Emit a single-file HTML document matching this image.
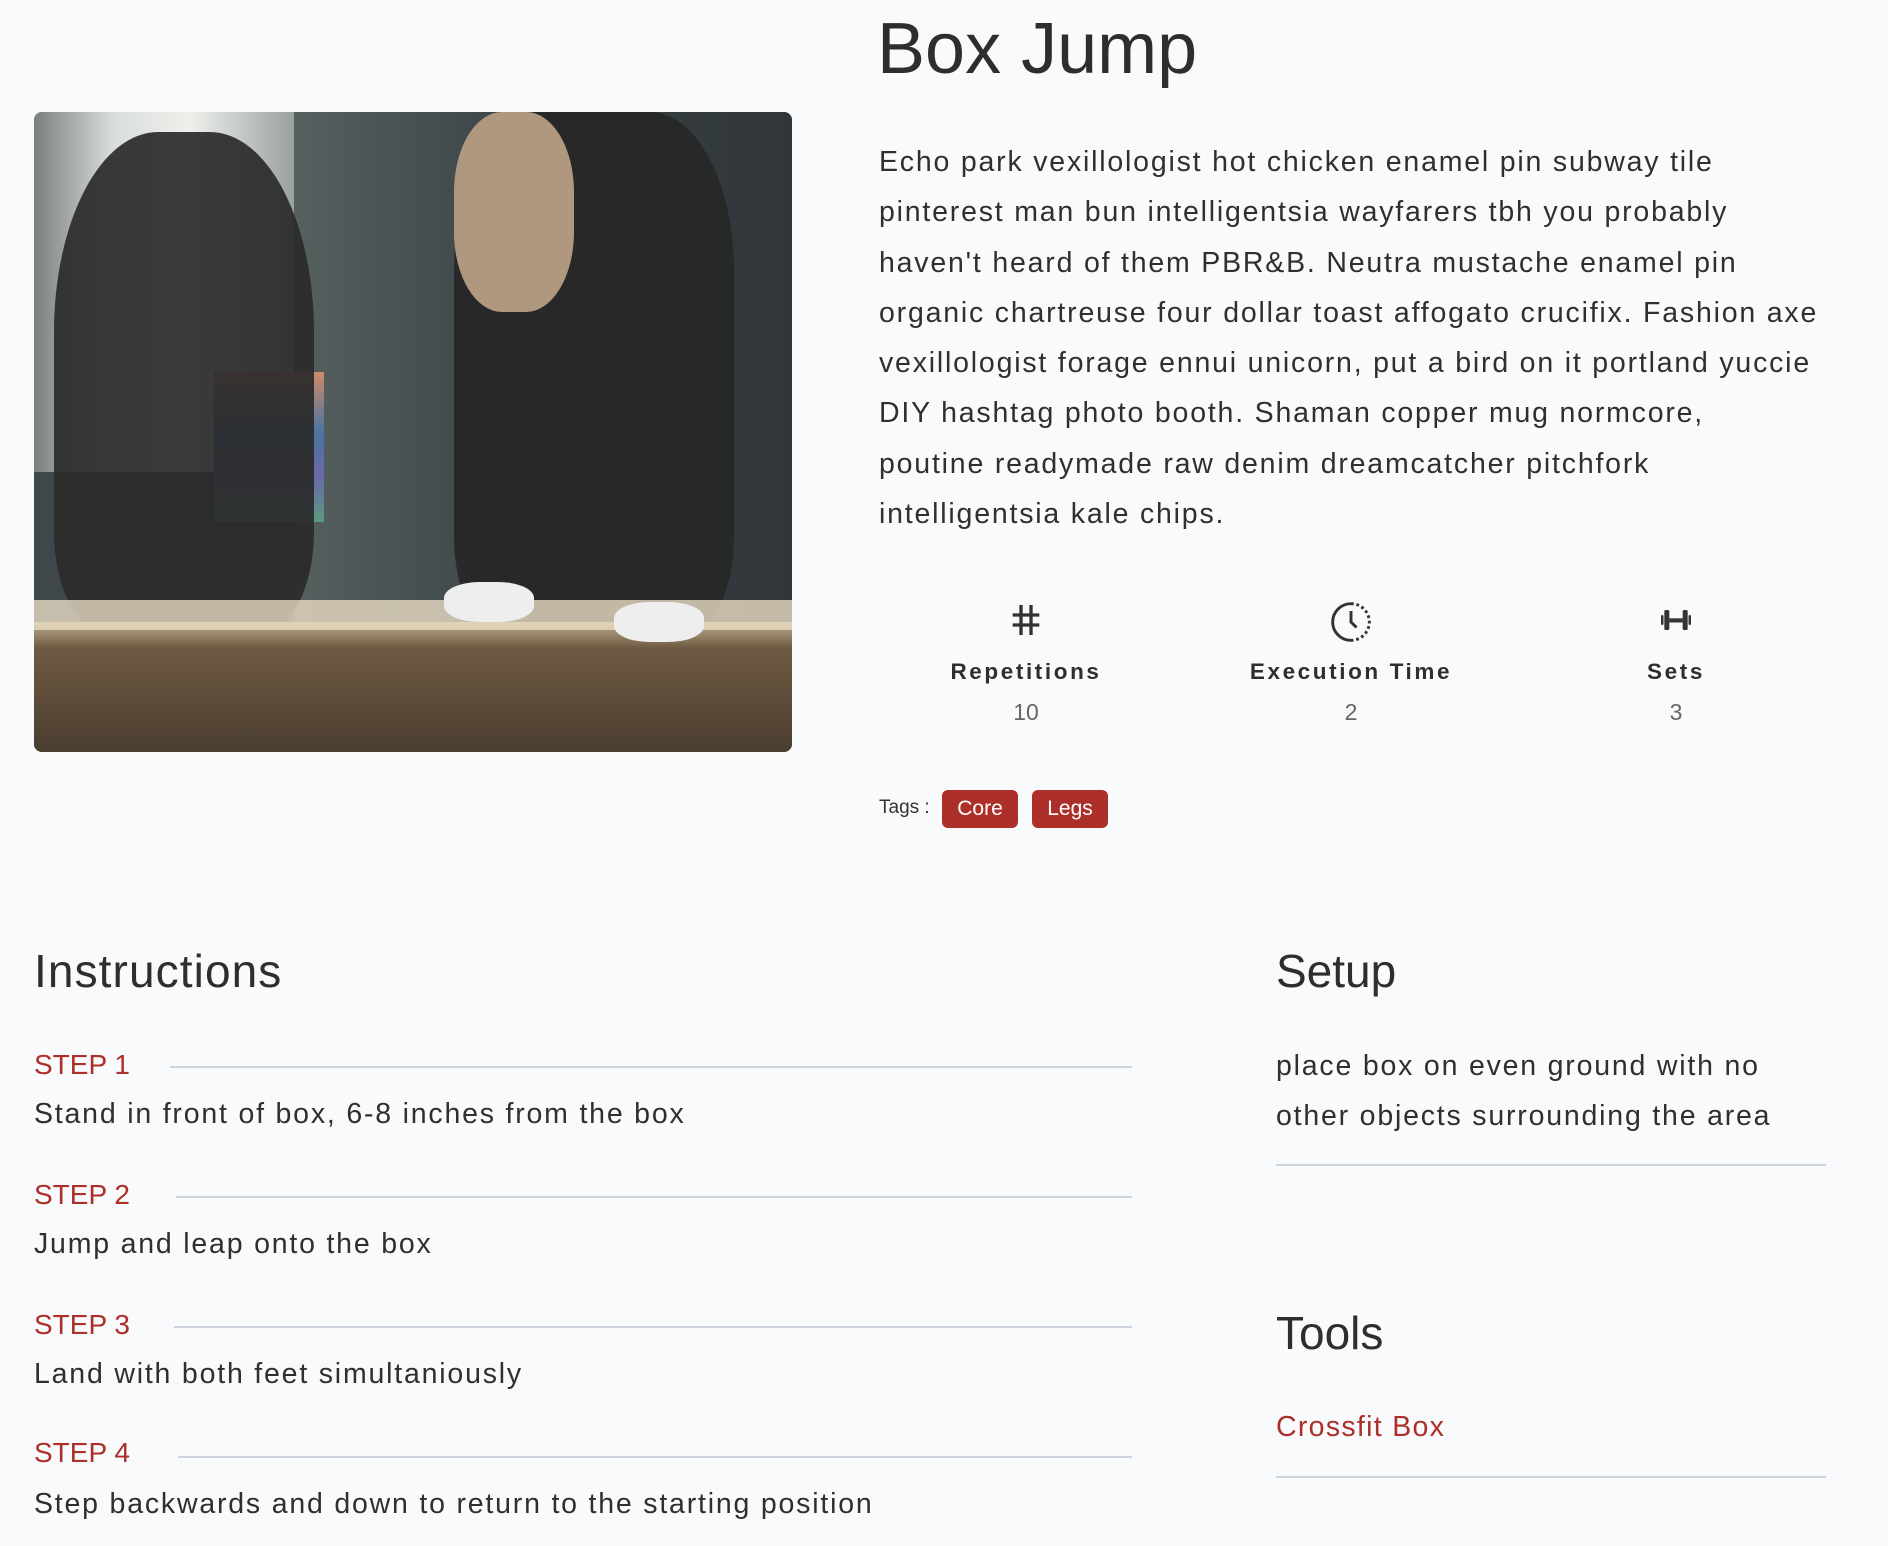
<!DOCTYPE html>
<html><head><meta charset="utf-8"><style>
*{margin:0;padding:0;box-sizing:border-box}
body{width:1888px;height:1546px;background:#f9fafc;font-family:"Liberation Sans",sans-serif;color:#333;position:relative;overflow:hidden}
.a{position:absolute;white-space:nowrap}
.img{position:absolute;left:34px;top:112px;width:758px;height:640px;border-radius:8px;overflow:hidden;background:#3f474b}
.img div{position:absolute}
.p{left:879px;top:137px;font-size:28.5px;line-height:50.3px;color:#2f2f2f;letter-spacing:1.8px}
.stat{position:absolute;width:300px;text-align:center}
.stat b{display:block;font-size:22.5px;letter-spacing:2.6px;color:#2e2e2e;margin-top:14px}
.stat span{display:block;font-size:23px;color:#666;margin-top:14px}
.tag{position:absolute;top:790px;height:38px;background:#ad2f29;color:#fff;border-radius:6px;font-size:21px;line-height:38px;text-align:center}
h2{position:absolute;font-weight:normal;font-size:46px;color:#2e2e2e;white-space:nowrap}
.step{position:absolute;left:34px;font-size:28px;color:#ad2f29}
.ln{position:absolute;height:2px;background:#cdd4df}
.t{position:absolute;font-size:28.5px;color:#2f2f2f;white-space:nowrap;letter-spacing:1.8px}
</style></head><body>
<div class="a" style="left:877px;top:8px;font-size:72px;color:#2e2e2e">Box Jump</div>
<div class="img">
 <div style="left:0;top:0;width:260px;height:360px;background:linear-gradient(90deg,#7a8080,#d8dcd8 30%,#eef0ec 60%,#9aa0a0)"></div>
 <div style="left:260px;top:0;width:500px;height:520px;background:linear-gradient(90deg,#56605f,#3e4649 40%,#2f3538)"></div>
 <div style="left:180px;top:260px;width:110px;height:150px;background:linear-gradient(#d08a6a,#4a74a0 40%,#6a6aa8 70%,#5a9a80)"></div>
 <div style="left:20px;top:20px;width:260px;height:500px;border-radius:40% 40% 20% 20%;background:#2a2a2a;opacity:.92"></div>
 <div style="left:420px;top:0;width:280px;height:530px;border-radius:30% 30% 20% 20%;background:#272727;opacity:.95"></div>
 <div style="left:420px;top:0;width:120px;height:200px;background:#b09880;border-radius:40%"></div>
 <div style="left:0;top:510px;width:758px;height:130px;background:linear-gradient(#c0ae8e,#6e5a42 20%,#4a3d30)"></div>
 <div style="left:0;top:488px;width:758px;height:30px;background:#e8dcc4;opacity:.8"></div>
 <div style="left:410px;top:470px;width:90px;height:40px;background:#eee;border-radius:40%"></div>
 <div style="left:580px;top:490px;width:90px;height:40px;background:#eee;border-radius:40%"></div>
</div>
<div class="a p">Echo park vexillologist hot chicken enamel pin subway tile<br>pinterest man bun intelligentsia wayfarers tbh you probably<br>haven't heard of them PBR&amp;B. Neutra mustache enamel pin<br>organic chartreuse four dollar toast affogato crucifix. Fashion axe<br>vexillologist forage ennui unicorn, put a bird on it portland yuccie<br>DIY hashtag photo booth. Shaman copper mug normcore,<br>poutine readymade raw denim dreamcatcher pitchfork<br>intelligentsia kale chips.</div>

<div class="stat" style="left:876px;top:600px"><svg width="40" height="40" viewBox="0 0 24 24" fill="none" stroke="#333" stroke-width="2"><path d="M9 3v18M15 3v18M4 9h16M4 15h16"/></svg><b>Repetitions</b><span>10</span></div>
<div class="stat" style="left:1201px;top:600px"><svg width="44" height="44" viewBox="0 0 24 24" fill="none" stroke="#333" stroke-width="1.6"><path d="M12 2a10 10 0 0 0 0 20"/><path d="M12 2a10 10 0 0 1 0 20" stroke-dasharray="1.5 1.5"/><path d="M12 6v6l3 3"/></svg><b style="margin-top:10px">Execution Time</b><span>2</span></div>
<div class="stat" style="left:1526px;top:600px"><svg width="40" height="40" viewBox="0 0 24 24" fill="#333"><rect x="3" y="9" width="1.5" height="6" rx=".7"/><rect x="5" y="6" width="3" height="12" rx="1"/><rect x="8" y="11" width="8" height="2.5"/><rect x="16" y="6" width="3" height="12" rx="1"/><rect x="19.5" y="9" width="1.5" height="6" rx=".7"/></svg><b>Sets</b><span>3</span></div>

<div class="a" style="left:879px;top:797px;font-size:19px;color:#333">Tags :</div>
<div class="tag" style="left:942px;width:76px">Core</div>
<div class="tag" style="left:1032px;width:76px">Legs</div>

<h2 style="left:34px;top:944px;letter-spacing:1.1px">Instructions</h2>
<div class="step" style="top:1049px">STEP 1</div><div class="ln" style="left:170px;width:962px;top:1066px"></div>
<div class="t" style="left:34px;top:1098px">Stand in front of box, 6-8 inches from the box</div>
<div class="step" style="top:1179px">STEP 2</div><div class="ln" style="left:176px;width:956px;top:1196px"></div>
<div class="t" style="left:34px;top:1228px">Jump and leap onto the box</div>
<div class="step" style="top:1309px">STEP 3</div><div class="ln" style="left:174px;width:958px;top:1326px"></div>
<div class="t" style="left:34px;top:1358px">Land with both feet simultaniously</div>
<div class="step" style="top:1437px">STEP 4</div><div class="ln" style="left:178px;width:954px;top:1456px"></div>
<div class="t" style="left:34px;top:1488px">Step backwards and down to return to the starting position</div>

<h2 style="left:1276px;top:944px">Setup</h2>
<div class="t" style="left:1276px;top:1041px;line-height:50px">place box on even ground with no<br>other objects surrounding the area</div>
<div class="ln" style="left:1276px;width:550px;top:1164px"></div>
<h2 style="left:1276px;top:1306px">Tools</h2>
<div class="t" style="left:1276px;top:1411px;color:#ad2f29;letter-spacing:1.3px">Crossfit Box</div>
<div class="ln" style="left:1276px;width:550px;top:1476px"></div>
</body></html>
